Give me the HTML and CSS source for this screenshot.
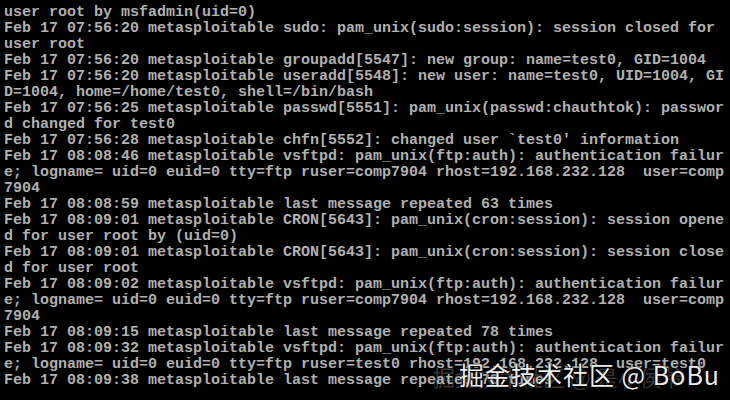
FILE: index.html
```html
<!DOCTYPE html>
<html>
<head>
<meta charset="utf-8">
<link rel="stylesheet" href="styles.css">
</head>
<body>
<div class="screen">
<pre class="console">user root by msfadmin(uid=0)
Feb 17 07:56:20 metasploitable sudo: pam_unix(sudo:session): session closed for
user root
Feb 17 07:56:20 metasploitable groupadd[5547]: new group: name=test0, GID=1004
Feb 17 07:56:20 metasploitable useradd[5548]: new user: name=test0, UID=1004, GI
D=1004, home=/home/test0, shell=/bin/bash
Feb 17 07:56:25 metasploitable passwd[5551]: pam_unix(passwd:chauthtok): passwor
d changed for test0
Feb 17 07:56:28 metasploitable chfn[5552]: changed user `test0' information
Feb 17 08:08:46 metasploitable vsftpd: pam_unix(ftp:auth): authentication failur
e; logname= uid=0 euid=0 tty=ftp ruser=comp7904 rhost=192.168.232.128  user=comp
7904
Feb 17 08:08:59 metasploitable last message repeated 63 times
Feb 17 08:09:01 metasploitable CRON[5643]: pam_unix(cron:session): session opene
d for user root by (uid=0)
Feb 17 08:09:01 metasploitable CRON[5643]: pam_unix(cron:session): session close
d for user root
Feb 17 08:09:02 metasploitable vsftpd: pam_unix(ftp:auth): authentication failur
e; logname= uid=0 euid=0 tty=ftp ruser=comp7904 rhost=192.168.232.128  user=comp
7904
Feb 17 08:09:15 metasploitable last message repeated 78 times
Feb 17 08:09:32 metasploitable vsftpd: pam_unix(ftp:auth): authentication failur
e; logname= uid=0 euid=0 tty=ftp ruser=test0 rhost=192.168.232.128  user=test0
Feb 17 08:09:38 metasploitable last message repeated 78 times</pre>
<div class="watermark">
<span class="wm-ghost">掘金技术社区 @ 是小侯爷</span>
<span class="wm-main">掘金技术社区 @ BoBu</span>
</div>
</div>
</body>
</html>
```
FILE: styles.css
```css
html, body {
  margin: 0;
  padding: 0;
  background: #000;
}
.screen {
  position: relative;
  width: 730px;
  height: 400px;
  overflow: hidden;
  background: #000;
}
.console {
  margin: 0;
  padding: 5px 0 0 4px;
  font-family: "Liberation Mono", "DejaVu Sans Mono", monospace;
  font-size: 15px;
  line-height: 16px;
  color: #b0b0b0;
  font-weight: bold;
  white-space: pre;
}
.watermark {
  position: absolute;
  left: 433px;
  top: 357px;
  width: 297px;
  height: 36px;
  font-family: "Noto Sans CJK SC", sans-serif;
}
.wm-ghost {
  position: absolute;
  left: 0;
  top: 3px;
  font-size: 22px;
  color: rgba(190, 190, 190, 0.3);
  white-space: nowrap;
}
.wm-main {
  position: absolute;
  left: 26px;
  top: 0;
  font-size: 25px;
  line-height: 34px;
  letter-spacing: 1px;
  color: #ececec;
  white-space: nowrap;
  text-shadow: 0 0 2px #000, 1px 1px 1px #000;
}
```
